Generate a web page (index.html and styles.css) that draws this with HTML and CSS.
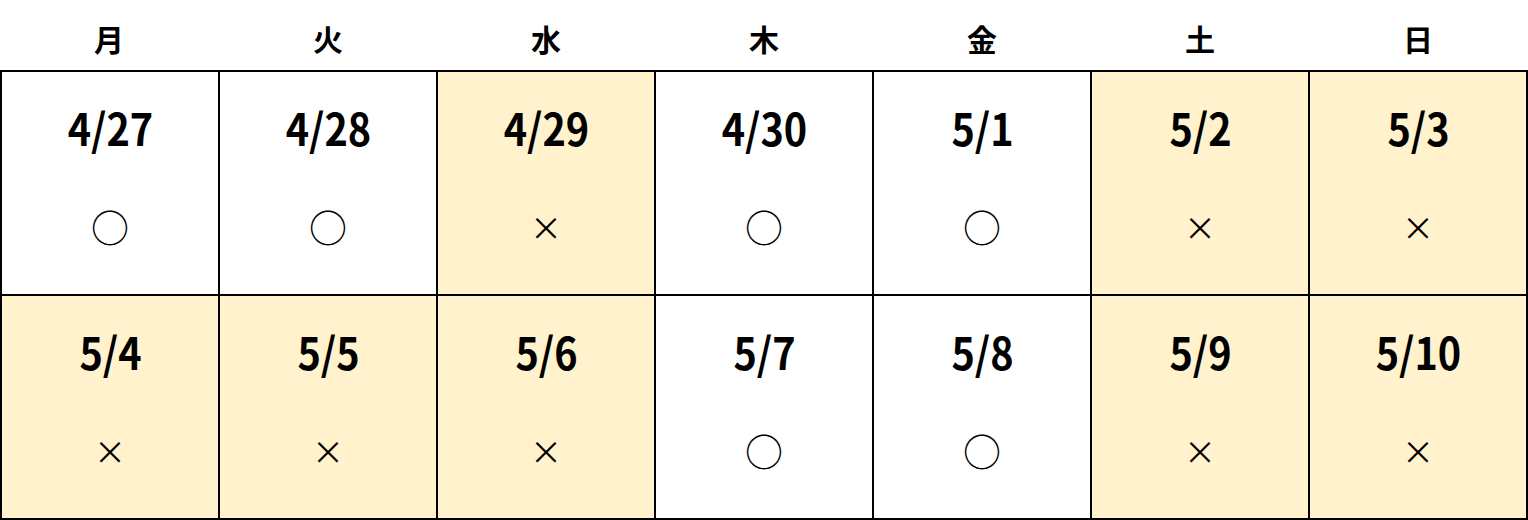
FILE: index.html
```html
<!DOCTYPE html>
<html lang="ja">
<head>
<meta charset="utf-8">
<link rel="stylesheet" href="styles.css">
</head>
<body>
<div class="cal">
  <div class="head">
    <div class="dow">月</div><div class="dow">火</div><div class="dow">水</div><div class="dow">木</div><div class="dow">金</div><div class="dow">土</div><div class="dow">日</div>
  </div>
  <div class="grid">
    <div class="cell"><div class="date">4/27</div><div class="mark">○</div></div>
    <div class="cell"><div class="date">4/28</div><div class="mark">○</div></div>
    <div class="cell off"><div class="date">4/29</div><div class="mark x">×</div></div>
    <div class="cell"><div class="date">4/30</div><div class="mark">○</div></div>
    <div class="cell"><div class="date">5/1</div><div class="mark">○</div></div>
    <div class="cell off"><div class="date">5/2</div><div class="mark x">×</div></div>
    <div class="cell off"><div class="date">5/3</div><div class="mark x">×</div></div>
    <div class="cell off"><div class="date">5/4</div><div class="mark x">×</div></div>
    <div class="cell off"><div class="date">5/5</div><div class="mark x">×</div></div>
    <div class="cell off"><div class="date">5/6</div><div class="mark x">×</div></div>
    <div class="cell"><div class="date">5/7</div><div class="mark">○</div></div>
    <div class="cell"><div class="date">5/8</div><div class="mark">○</div></div>
    <div class="cell off"><div class="date">5/9</div><div class="mark x">×</div></div>
    <div class="cell off"><div class="date">5/10</div><div class="mark x">×</div></div>
  </div>
</div>
</body>
</html>
```
FILE: styles.css
```css
html, body { margin: 0; padding: 0; background: #fff; }
body { font-family: "Noto Sans CJK JP", "Noto Sans", sans-serif; color: #000; }
.cal { width: 1528px; }
.head { display: grid; grid-template-columns: 220px repeat(6, 218px); height: 70px; }
.dow { display: flex; align-items: center; justify-content: center; font-size: 30px; font-weight: 700; line-height: 1; padding-top: 6px; padding-right: 2px; box-sizing: border-box; }
.grid { display: grid; grid-template-columns: repeat(7, 218px); grid-auto-rows: 224px; border-left: 2px solid #000; border-top: 2px solid #000; }
.cell { border-right: 2px solid #000; border-bottom: 2px solid #000; display: flex; flex-direction: column; align-items: center; }
.off { background: #fff2cc; }
.date { font-size: 44px; font-weight: 700; line-height: 44px; height: 44px; margin-top: 33px; transform: scaleX(0.9); }
.mark { height: 40px; margin-top: 57px; display: flex; align-items: center; justify-content: center; font-size: 38px; line-height: 1; }
.mark.x { font-size: 32px; }
```
